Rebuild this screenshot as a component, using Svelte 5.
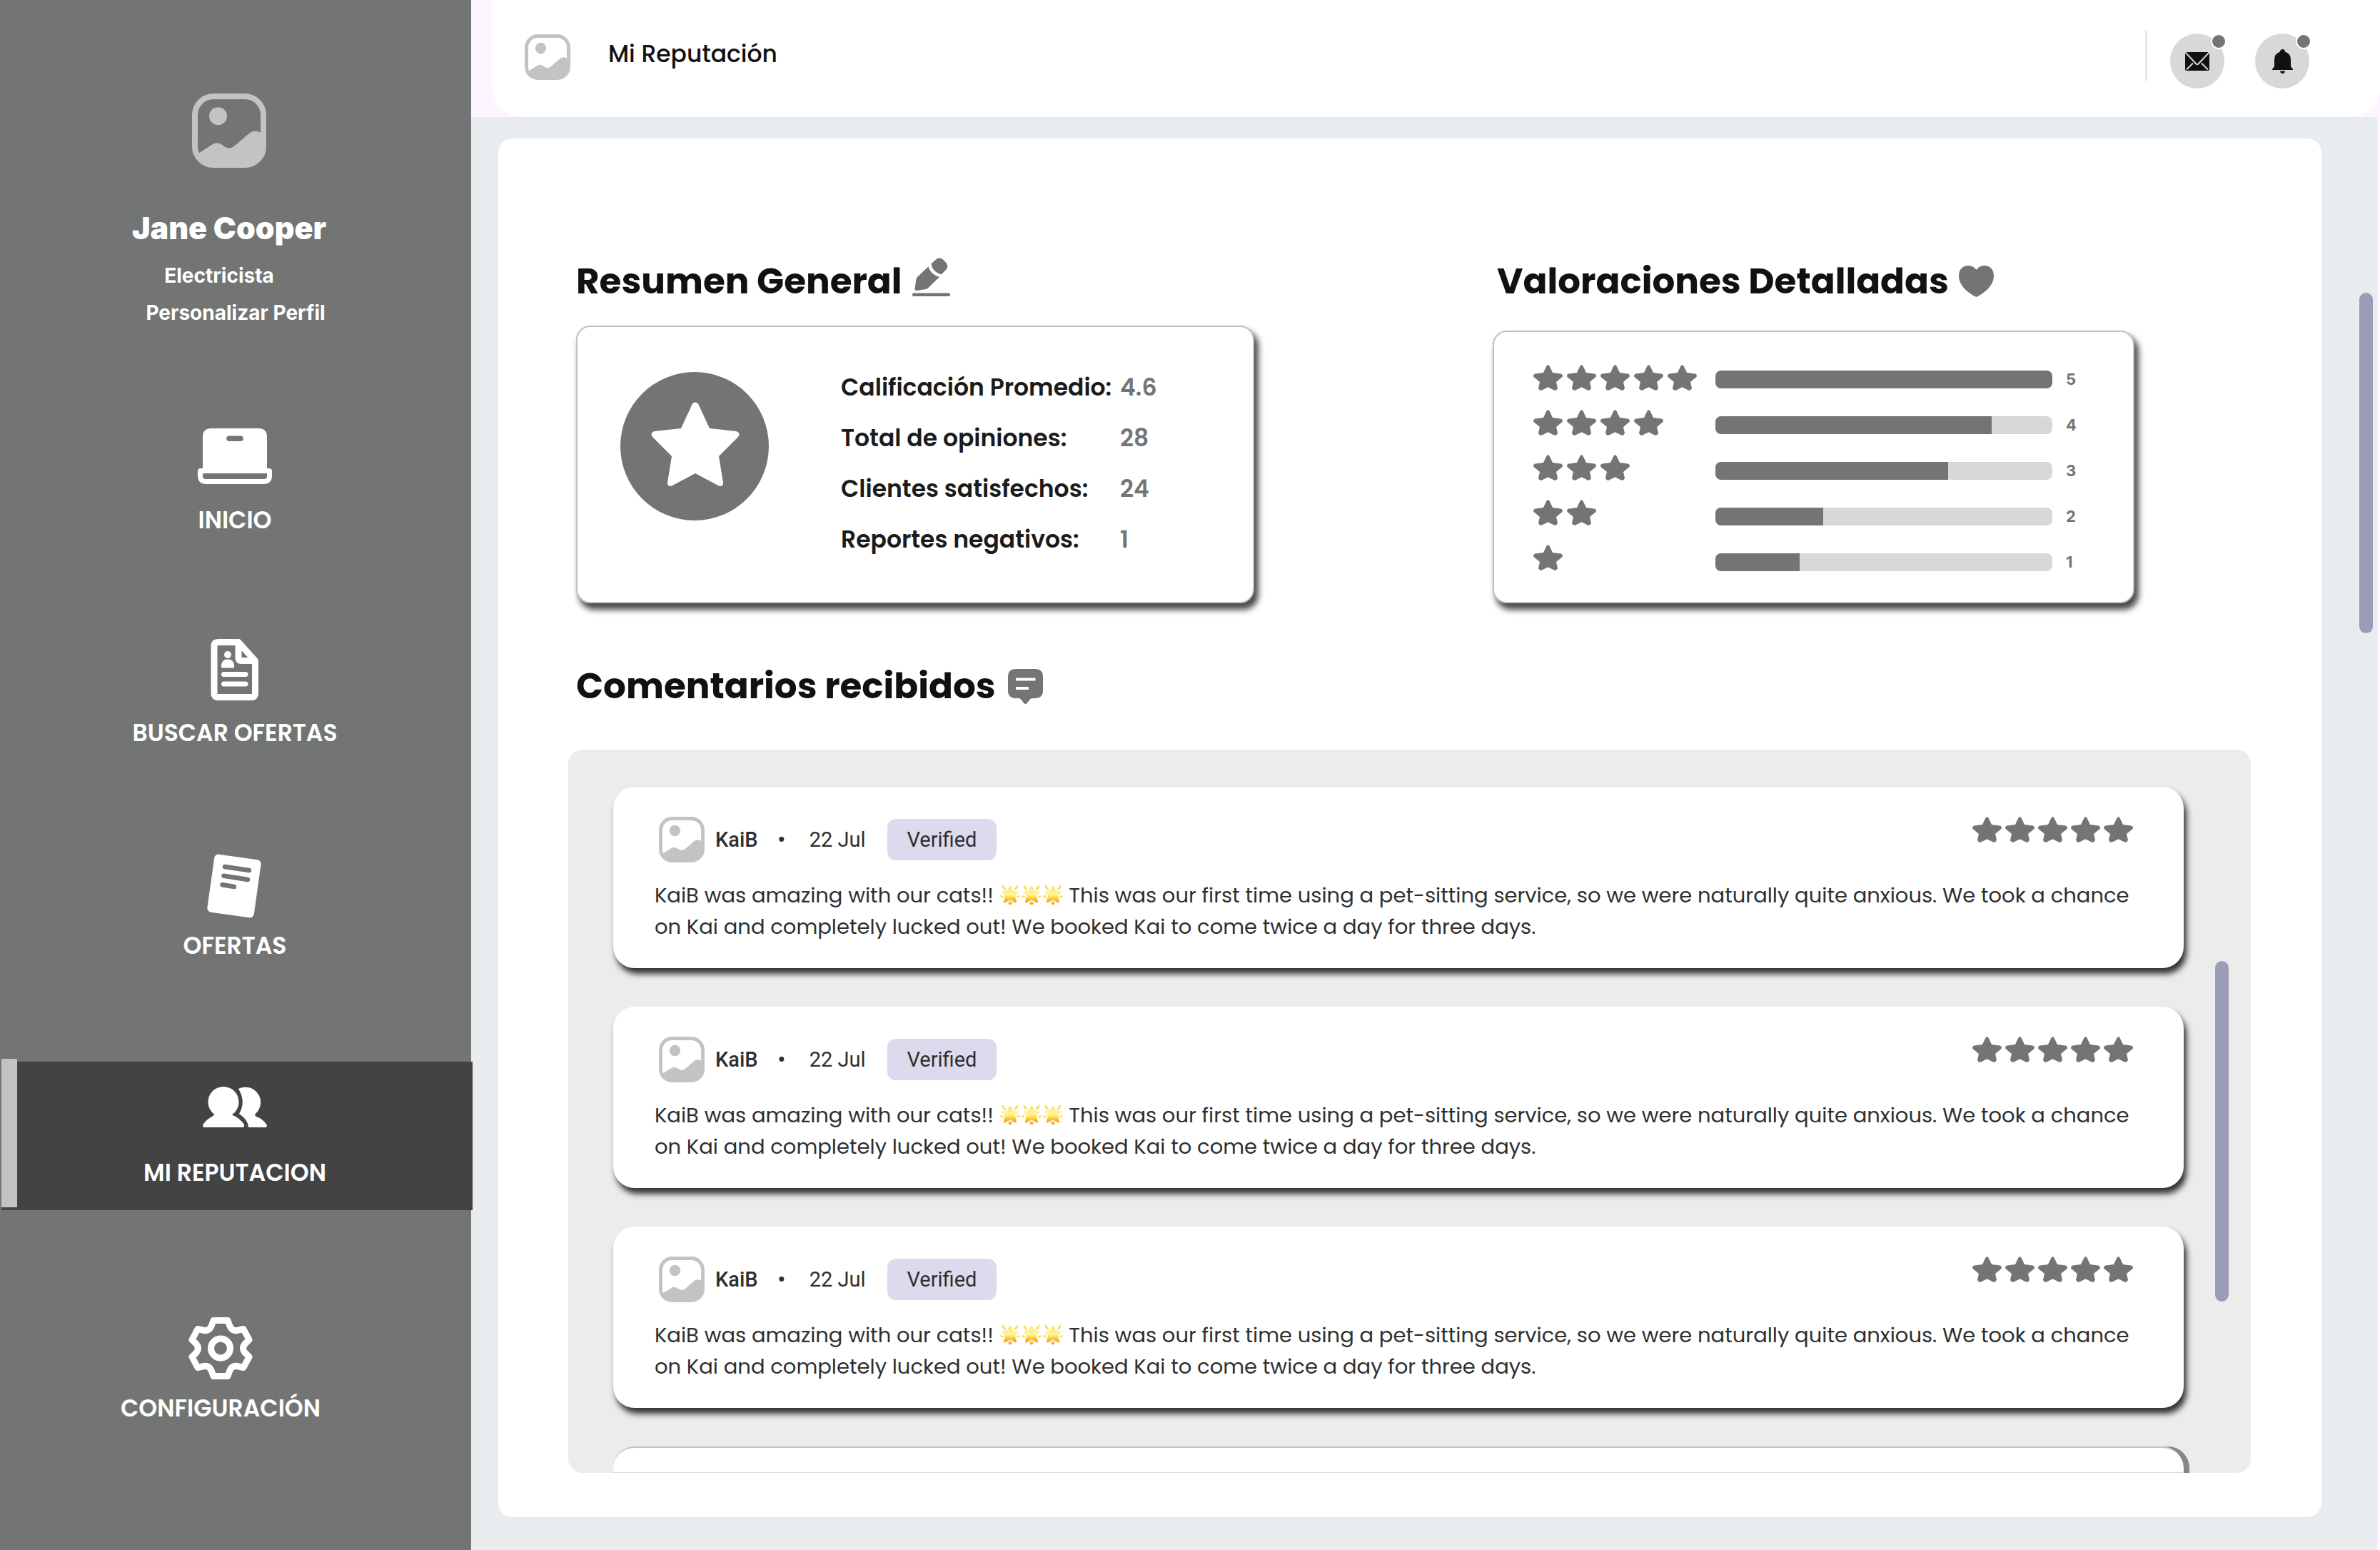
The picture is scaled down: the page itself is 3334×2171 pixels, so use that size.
<script>
  const nav = [
    { id: 'home', label: 'INICIO' },
    { id: 'search', label: 'BUSCAR OFERTAS' },
    { id: 'offers', label: 'OFERTAS' },
    { id: 'reputation', label: 'MI REPUTACION', active: true },
    { id: 'settings', label: 'CONFIGURACIÓN' },
  ];

  const summary = [
    ['Calificación Promedio:', '4.6'],
    ['Total de opiniones:', '28'],
    ['Clientes satisfechos:', '24'],
    ['Reportes negativos:', '1'],
  ];

  const ratings = [
    { stars: 5, share: 100 },
    { stars: 4, share: 82 },
    { stars: 3, share: 69 },
    { stars: 2, share: 32 },
    { stars: 1, share: 25 },
  ];

  const review = {
    author: 'KaiB',
    date: '22 Jul',
    stars: 5,
    before: 'KaiB was amazing with our cats!!',
    after:
      'This was our first time using a pet-sitting service, so we were naturally quite anxious. We took a chance on Kai and completely lucked out! We booked Kai to come twice a day for three days.',
  };
  const reviews = [review, review, review];
</script>

{#snippet picture(cls)}
  <svg class={cls} viewBox="0 0 104 104" aria-hidden="true">
    <rect x="4" y="4" width="96" height="96" rx="26" fill="none" stroke="#c3c3c3" stroke-width="8" />
    <circle cx="36.5" cy="31.7" r="12.5" fill="#c3c3c3" />
    <path fill="#c3c3c3" d="M7 85 29 71Q36 67 43 72.500Q52 80 60 73L81 55Q88 49.500 98 56V74Q98 98 74 98H30Q12 98 7 85Z" />
  </svg>
{/snippet}

{#snippet stars(count)}
  <span class="stars" role="img" aria-label={`${count} de 5 estrellas`}>
    {#each Array(count) as _}
      <svg viewBox="0 0 41 36" aria-hidden="true">
        <path d="M18.500 1.500Q20.500-1 22.500 1.500L27 11 38.500 12.500Q42 13.500 40.500 17L32 24 34 32.500Q32.500 36.500 29 35.500L20.500 31.300 12 35.500Q8.500 36.500 7 32.500L9 24 .5 17Q-1 13.500 2.500 12.500L14 11Z" />
      </svg>
    {/each}
  </span>
{/snippet}

{#snippet glow()}
  <svg class="glow" viewBox="0 0 29 30" aria-hidden="true">
    <g fill="#f7dc5a">
      <path d="M3 1Q8 4 9 9Q3 8 3 1ZM26 1Q21 4 20 9Q26 8 26 1ZM0 17Q3 15 6 18Q4 21 0 17ZM29 17Q26 15 23 18Q25 21 29 17Z" />
      <circle cx="14.500" cy="27" r="2.500" fill="#efb24a" />
    </g>
    <path fill="url(#glow-fill)" d="M14.500 3Q16 3 18.500 9.500L25 10.500Q27 11.500 25.500 13L21.500 17 23.500 25Q23.500 27.500 21 26L14.500 22.500 8 26Q5.500 27.500 5.500 25L7.500 17 3.500 13Q2 11.500 4 10.500L10.500 9.500Q13 3 14.500 3Z" />
  </svg>
{/snippet}

<svg class="defs" aria-hidden="true">
  <defs>
    <linearGradient id="glow-fill" x1="0" y1="0" x2="0" y2="1">
      <stop offset="0" stop-color="#f8e36a" />
      <stop offset=".5" stop-color="#fff7a0" />
      <stop offset=".7" stop-color="#fdd43a" />
      <stop offset="1" stop-color="#ef9a1c" />
    </linearGradient>
  </defs>
</svg>

<div class="shell">
  <aside class="sidebar">
    <div class="profile">
      {@render picture('avatar')}
      <strong class="name">Jane Cooper</strong>
      <span class="role">Electricista</span>
      <a class="edit" href="#perfil">Personalizar Perfil</a>
    </div>

    <nav aria-label="Principal">
      {#each nav as item}
        <a class="item {item.id}" class:active={item.active} href={`#${item.id}`} aria-current={item.active ? 'page' : undefined}>
          <svg viewBox="0 0 104 104" aria-hidden="true">
            {#if item.id === 'home'}
              <path fill="#fff" fill-rule="evenodd" d="M7 67V23Q7 11 19 11H85Q97 11 97 23V67H100Q104 67 104 71V77Q104 89 92 89H12Q0 89 0 77V71Q0 67 4 67ZM44 21.500A3.700 3.700 0 0 0 44 29H60A3.700 3.700 0 0 0 60 21.500ZM7 74V78Q7 82 11 82H93Q97 82 97 78V74Z" />
            {:else if item.id === 'search'}
              <g fill="none" stroke="#fff" stroke-width="9" stroke-linejoin="round" stroke-linecap="round">
                <path d="M57 12.500H28Q23 12.500 23 17.500V84.500Q23 89.500 28 89.500H75.500Q80.500 89.500 80.500 84.500V38.500ZM57 12.500V35Q57 38.500 60.500 38.500H80" />
                <path stroke-width="7" d="M36.500 57.500H67M36.500 71H67" />
              </g>
              <circle cx="42" cy="30" r="5" fill="#fff" />
              <path fill="#fff" d="M33 46Q33 36.500 42 36.500T51 46V47Q51 48.500 49.500 48.500H34.500Q33 48.500 33 47Z" />
            {:else if item.id === 'offers'}
              <rect x="18" y="15" width="66" height="82" rx="6" fill="#fff" transform="rotate(8 51 56)" />
              <path fill="none" stroke="#737574" stroke-width="6.500" stroke-linecap="round" d="M38 29 72 34M36.500 41.700 70 47M34.500 54.300 51 57" />
            {:else if item.id === 'reputation'}
              <circle cx="36" cy="40.500" r="21.500" fill="#fff" />
              <path fill="#fff" d="M24 57Q23 59 20 61 12 65 7.500 72 6 76 10 76H62Q66 76 65 72 59 63 48 58.500L50 55ZM57 22A21.400 21.400 0 0 1 81 57Q79 59 82 61 91 64 96.500 72 98 76 94 76H71Q71 66 58 57 68 40 57 22Z" />
            {:else}
              <g transform="translate(52 55.500)" fill="none" stroke="#fff" stroke-width="9" stroke-linejoin="round">
                <path d="M-10-39H10L13-31Q16-24 23-25L32-27 40-12 34-6Q29 0 34 6L40 12 32 27 23 25Q16 24 13 31L10 39H-10L-13 31Q-16 24-23 25L-32 27-40 12-34 6Q-29 0-34-6L-40-12-32-27-23-25Q-16-24-13-31Z" />
                <circle r="13.500" />
              </g>
            {/if}
          </svg>
          <span>{item.label}</span>
        </a>
      {/each}
    </nav>
  </aside>

  <div class="content">
    <header class="topbar">
      {@render picture('thumb')}
      <h1>Mi Reputación</h1>
      <div class="actions">
        <button type="button" aria-label="Mensajes">
          <svg width="34" height="26" viewBox="0 0 34 26" aria-hidden="true">
            <rect width="34" height="26" rx="2" fill="#111" />
            <path fill="none" stroke="#d8d8d8" stroke-width="2" d="M0 0 15.500 16.500Q17 18 18.500 16.500L34 0M11 15.500 2 24.500M23 15.500 32 24.500" />
          </svg>
          <span class="dot"></span>
        </button>
        <button type="button" aria-label="Notificaciones">
          <svg width="29" height="34" viewBox="0 0 29 34" aria-hidden="true">
            <path fill="#111" d="M11 3.500A3.500 3.500 0 0 1 18 3.500Q26 6 26 15V24L29 28V29H0V28L3 24V15Q3 6 11 3.500ZM11 30.500H18Q17.500 34 14.500 34T11 30.500Z" />
          </svg>
          <span class="dot"></span>
        </button>
      </div>
    </header>

    <main>
      <div class="panel">
        <div class="overview">
          <section class="general">
            <h2>
              Resumen General
              <svg width="54" height="54" viewBox="0 0 54 54" aria-hidden="true">
                <path d="M22.500 12.500Q25 23 38 27L22 42.500Q21 43.500 19 44L7 46Q3 46.500 3.500 43L5.500 30Q5.800 28 7.500 26.500ZM26.500 8.500 33 2.500Q38-1.500 43 2.500L47 6.500Q51.500 12 47.500 16.500L40.500 23.500Q28 20 26.500 8.500Z" />
                <rect y="49.500" width="53" height="4.500" rx="2" />
              </svg>
            </h2>
            <div class="card summary">
              <div class="badge-star">
                <svg width="124" height="118" viewBox="0 0 124 118" aria-hidden="true">
                  <path fill="#fff" d="M58 2.500Q62-1.500 66 2.500L82 37 119 41Q126 43 122 49L95 76 101 113Q101 120 94 117L62 100 30 117Q23 120 23 113L29 76 2 49Q-2 43 5 41L42 37Z" />
                </svg>
              </div>
              <dl>
                {#each summary as [label, value]}
                  <dt>{label}</dt>
                  <dd>{value}</dd>
                {/each}
              </dl>
            </div>
          </section>

          <section class="detail">
            <h2>
              Valoraciones Detalladas
              <svg width="49" height="44" viewBox="0 0 49 44" aria-hidden="true">
                <path d="M24.500 44C14 39 0 29 0 14 0 5 6 0 13 0 18 0 22 2 24.500 6 27 2 31 0 36 0 43 0 49 5 49 14 49 29 35 39 24.500 44Z" />
              </svg>
            </h2>
            <div class="card ratings">
              <div class="star-column">
                {#each ratings as row}
                  {@render stars(row.stars)}
                {/each}
              </div>
              <div class="bar-column">
                {#each ratings as row}
                  <div class="bar">
                    <div class="track" role="meter" aria-label={`${row.stars} estrellas`} aria-valuenow={row.share} aria-valuemin="0" aria-valuemax="100">
                      <div class="fill" style:width={`${row.share}%`}></div>
                    </div>
                    <span>{row.stars}</span>
                  </div>
                {/each}
              </div>
            </div>
          </section>
        </div>

        <section class="comments">
          <h2>
            Comentarios recibidos
            <svg width="49" height="49" viewBox="0 0 49 49" aria-hidden="true">
              <path d="M11 0H38Q49 0 49 11V30Q49 41 38 41H34Q32 41 30.500 43L26.500 48Q24.500 50 22.500 48L18.500 43Q17 41 15 41H11Q0 41 0 30V11Q0 0 11 0Z" />
              <path stroke="#fff" stroke-width="4" d="M11 14.500H38.500M11 27H29" />
            </svg>
          </h2>
          <div class="feed">
            {#each reviews as item}
              <article>
                <div class="meta">
                  {@render picture('thumb')}
                  <strong>{item.author}</strong>
                  <span class="sep">•</span>
                  <span>{item.date}</span>
                  <span class="verified">Verified</span>
                  {@render stars(item.stars)}
                </div>
                <p>
                  {item.before}
                  <span class="glows" role="img" aria-label="Tres estrellas brillantes">{@render glow()}{@render glow()}{@render glow()}</span>
                  {item.after}
                </p>
              </article>
            {/each}
            <div class="next"></div>
            <span class="thumb-bar"></span>
          </div>
        </section>
      </div>
      <span class="page-bar"></span>
    </main>
  </div>
</div>

<style>
  :global(body) {
    margin: 0;
  }
  .shell,
  .shell * {
    box-sizing: border-box;
  }
  .shell {
    display: flex;
    min-height: 100vh;
    font-family: Poppins, Inter, 'Liberation Sans', sans-serif;
    color: #111;
  }
  svg {
    display: block;
    flex: none;
  }
  .defs {
    position: absolute;
    width: 0;
    height: 0;
  }
  a {
    color: inherit;
    text-decoration: none;
  }

  /* sidebar */
  .sidebar {
    position: relative;
    z-index: 1;
    flex: 0 0 660px;
    background: #737574;
    color: #fff;
  }
  .profile {
    display: flex;
    flex-direction: column;
    align-items: center;
    padding: 131px 18px 115px 0;
    font-family: Inter, 'Liberation Sans', sans-serif;
    font-size: 28px;
    font-weight: 700;
    line-height: 40px;
  }
  .avatar {
    width: 104px;
    height: 104px;
  }
  .name {
    margin-top: 54px;
    font-size: 43px;
    line-height: 60px;
  }
  .role {
    margin-top: 17px;
    padding-right: 28px;
  }
  .edit {
    margin-top: 12px;
    padding-left: 18px;
  }
  nav {
    display: flex;
    flex-direction: column;
    gap: 90px;
  }
  .item {
    display: flex;
    flex-direction: column;
    align-items: center;
    gap: 14px;
    padding: 16px 2px 30px 0;
    font-size: 33px;
    font-weight: 600;
    line-height: 44px;
  }
  .item svg {
    width: 104px;
    height: 104px;
  }
  .item.active {
    position: relative;
    margin: 20px -2px 32px 2px;
    padding-right: 6px;
    background: #434343;
  }
  .item.active::before {
    content: '';
    position: absolute;
    left: 0;
    top: -4px;
    width: 22px;
    height: 100%;
    background: #c3c3c3;
  }
  .item.settings {
    padding-right: 42px;
  }

  /* top bar */
  .content {
    flex: 1;
    min-width: 0;
    display: flex;
    flex-direction: column;
    background: #fdf5ff;
  }
  .topbar {
    display: flex;
    align-items: flex-start;
    margin-left: 30px;
    padding: 43px 99px 40px 45px;
    background: #fff;
    border-radius: 0 0 40px 40px;
  }
  .thumb {
    width: 64px;
    height: 64px;
  }
  .topbar .thumb {
    margin-top: 5px;
  }
  h1 {
    margin: 0 auto 0 53px;
    font-size: 33px;
    font-weight: 500;
    line-height: 66px;
  }
  .actions {
    display: flex;
    gap: 43px;
    position: relative;
    padding: 4px 0 0 35px;
  }
  .actions::before {
    content: '';
    position: absolute;
    left: 0;
    top: 0;
    width: 3px;
    height: 70px;
    background: #e4e4ea;
  }
  button {
    position: relative;
    display: grid;
    place-items: center;
    width: 76px;
    height: 77px;
    padding: 0;
    border: 0;
    border-radius: 50%;
    background: #d8d8d8;
  }
  .dot {
    position: absolute;
    top: 0;
    right: -3px;
    width: 22px;
    height: 22px;
    border: 2px solid #fff;
    border-radius: 50%;
    background: #737574;
  }

  /* main panel */
  main {
    position: relative;
    flex: 1;
    margin-right: 4px;
    padding: 30px 78px 46px 38px;
    background: #e8ecef;
  }
  .page-bar,
  .thumb-bar {
    position: absolute;
    width: 19px;
    height: 477px;
    border-radius: 10px;
    background: #9a9db5;
  }
  .page-bar {
    top: 246px;
    right: 6px;
  }
  .panel {
    padding: 165px 99px 62px 98px;
    border-radius: 20px;
    background: #fff;
  }
  .overview {
    display: flex;
    justify-content: space-between;
    padding: 0 163px 0 11px;
  }
  .overview section {
    display: flex;
    flex-direction: column;
  }
  .general {
    flex: 0 1 950px;
    gap: 27px;
  }
  .detail {
    flex: 0 1 899px;
    gap: 34px;
  }
  h2 {
    display: flex;
    align-items: center;
    gap: 17px;
    margin: 0;
    font-size: 50px;
    font-weight: 700;
    line-height: 70px;
    white-space: nowrap;
  }
  h2 svg {
    fill: #737574;
  }
  .general h2,
  .detail h2 {
    gap: 14px;
  }
  .general h2 svg {
    margin-bottom: 12px;
  }
  .detail h2 {
    padding-left: 6px;
  }
  .card {
    flex: 1;
    display: flex;
    border: 2px solid #c0c1c0;
    border-radius: 20px;
    background: #fff;
    box-shadow: 5px 8px 8px 1px #4a4c4b;
  }
  .summary {
    gap: 101px;
    padding: 49px 40px 52px 60px;
  }
  .badge-star {
    flex: none;
    display: grid;
    place-items: center;
    width: 208px;
    height: 208px;
    margin-top: 14px;
    padding: 0 0 6px 2px;
    border-radius: 50%;
    background: #737574;
  }
  dl {
    display: grid;
    grid-template-columns: 391px auto;
    margin: 0;
    font-size: 33px;
    font-weight: 600;
    line-height: 71px;
    white-space: nowrap;
    color: #1b1b1b;
  }
  dd {
    margin: 0;
    color: #737574;
  }
  .ratings {
    padding: 32px 80px 24px 55px;
  }
  .star-column {
    flex: 0 0 255px;
  }
  .star-column .stars {
    height: 63px;
    align-items: center;
  }
  .stars {
    display: flex;
    gap: 5px;
  }
  .stars svg {
    width: 41px;
    height: 36px;
    fill: #737574;
  }
  .star-column .stars {
    gap: 6px;
  }
  .bar-column {
    flex: 1;
    padding-top: 2px;
  }
  .bar {
    display: flex;
    align-items: center;
    gap: 19px;
    height: 64px;
    font-family: Inter, 'Liberation Sans', sans-serif;
    font-size: 22px;
    font-weight: 700;
    color: #737574;
  }
  .bar span {
    width: 14px;
  }
  .track {
    flex: 1;
    height: 25px;
    overflow: hidden;
    border-radius: 8px;
    background: #d8d8d8;
  }
  .fill {
    height: 100%;
    background: #737574;
  }

  /* comments */
  .comments h2 {
    margin-top: 81px;
    padding-left: 11px;
  }
  .feed {
    position: relative;
    display: flex;
    flex-direction: column;
    gap: 54px;
    margin-top: 54px;
    padding: 52px 94px 0 63px;
    border-radius: 20px;
    background: #ececec;
  }
  .thumb-bar {
    top: 296px;
    right: 31px;
  }
  article {
    padding: 42px 64px 36px 58px;
    border-radius: 30px;
    background: #fff;
    box-shadow: 4px 8px 8px #2f3231;
  }
  .meta {
    display: flex;
    align-items: center;
    padding: 0 7px 0 6px;
    font-family: Roboto, 'Liberation Sans', sans-serif;
    font-size: 29px;
    color: #2e2f2f;
  }
  .meta strong {
    margin-left: 15px;
    font-weight: 500;
  }
  .sep {
    width: 72px;
    padding-right: 6px;
    font-weight: 700;
    text-align: center;
  }
  .verified {
    margin-left: 30px;
    padding: 0 28px;
    border-radius: 12px;
    background: #dddaed;
    line-height: 58px;
  }
  .meta .stars {
    align-self: flex-start;
    margin-left: auto;
  }
  p {
    margin: 24px 0 0;
    font-size: 29px;
    line-height: 44px;
    color: #2e2f2f;
  }
  .glows {
    display: inline-flex;
    vertical-align: -4px;
  }
  .glow {
    width: 30px;
    height: 30px;
  }
  .next {
    height: 37px;
    border-top: 2px solid #c3c3c3;
    border-bottom: 1px solid #dcdcdc;
    border-radius: 30px 30px 0 0;
    background: #fff;
    box-shadow: 8px 0 0 #868686;
  }
</style>
